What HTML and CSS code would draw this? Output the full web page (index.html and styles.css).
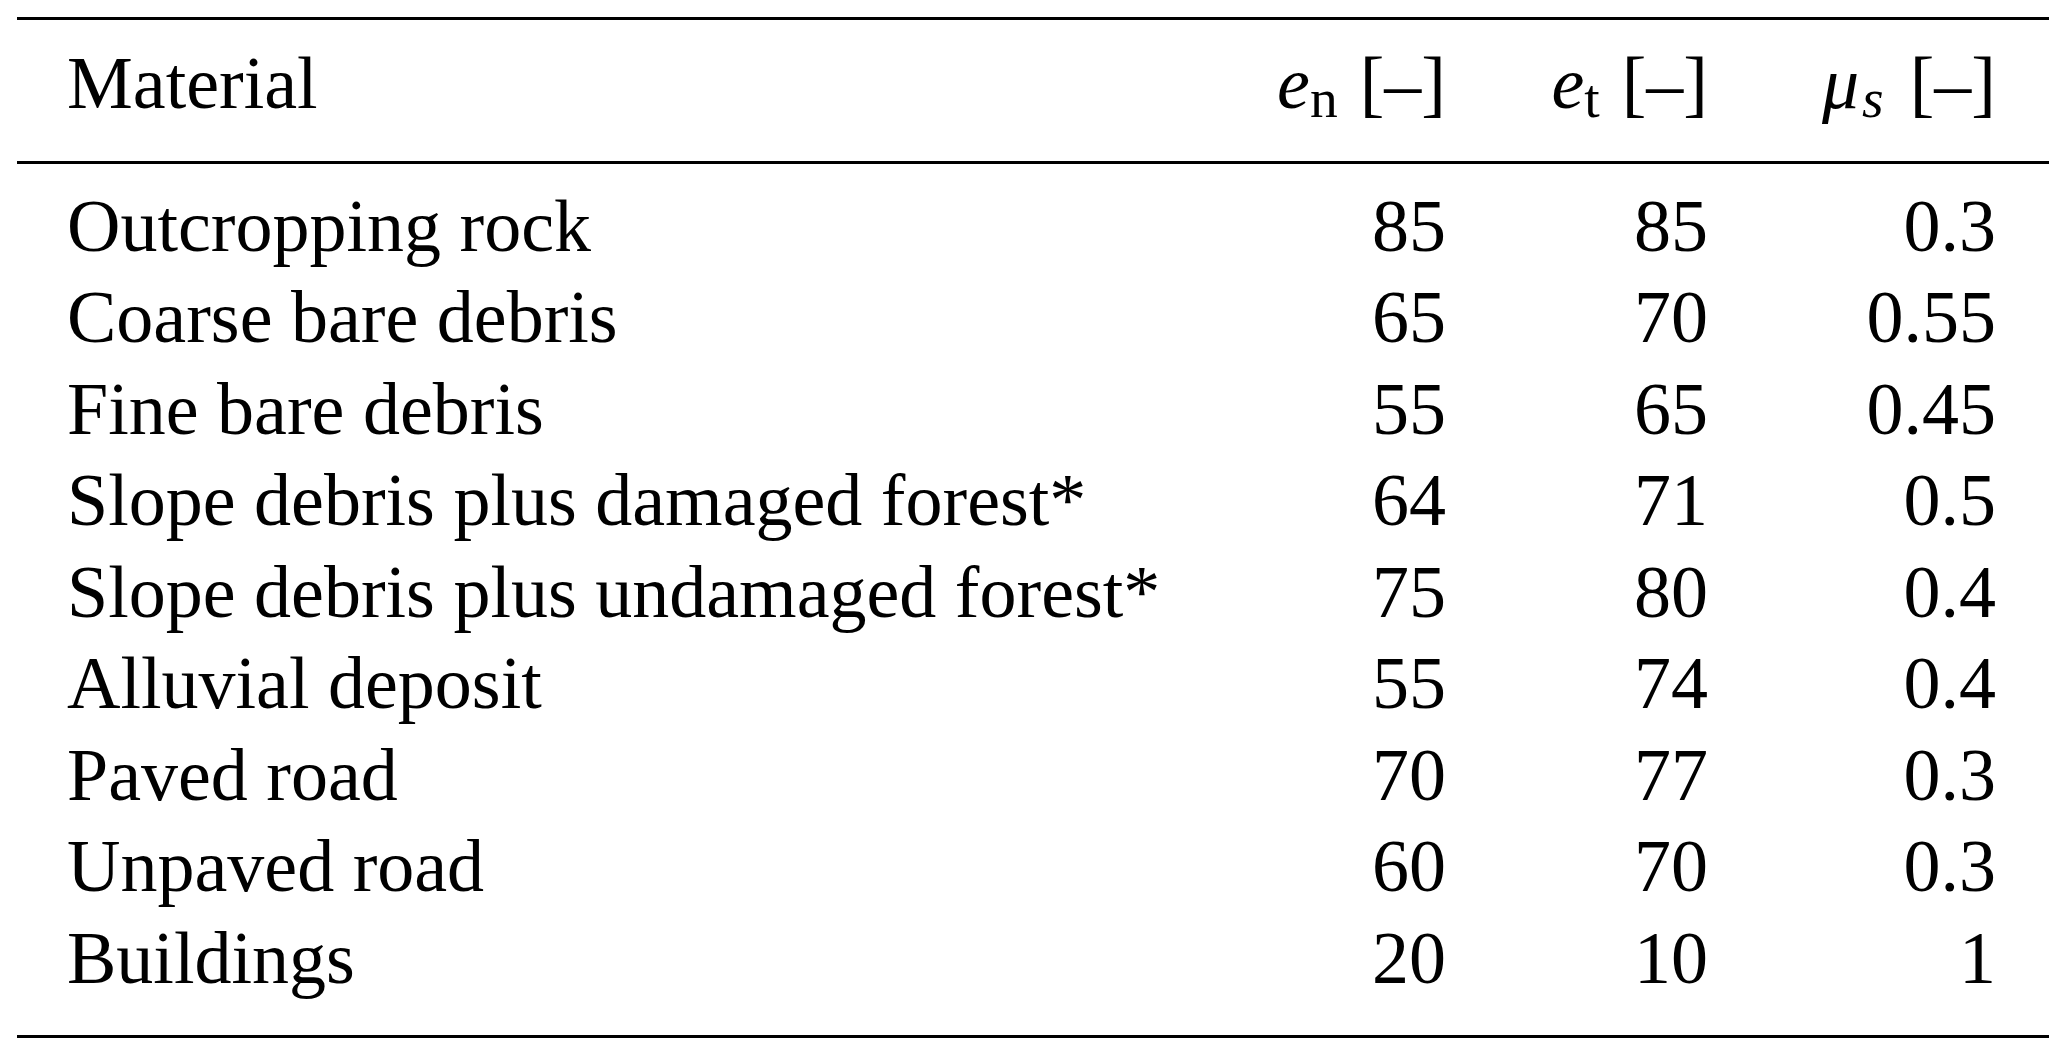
FILE: index.html
```html
<!DOCTYPE html>
<html lang="en">
<head>
<meta charset="utf-8">
<title>Material parameters</title>
<link rel="stylesheet" href="styles.css">
</head>
<body>
<div class="tbl">
  <div class="head">
    <div class="row">
      <div class="cell mat">Material</div>
      <div class="cell num"><span class="var">e</span><span class="sub">n</span><span class="unit">[–]</span></div>
      <div class="cell num"><span class="var">e</span><span class="sub">t</span><span class="unit">[–]</span></div>
      <div class="cell num"><span class="var mu">μ</span><span class="sub it">s</span><span class="unit wide">[–]</span></div>
    </div>
  </div>
  <div class="body">
    <div class="row"><div class="cell mat">Outcropping rock</div><div class="cell num">85</div><div class="cell num">85</div><div class="cell num">0.3</div></div>
    <div class="row"><div class="cell mat">Coarse bare debris</div><div class="cell num">65</div><div class="cell num">70</div><div class="cell num">0.55</div></div>
    <div class="row"><div class="cell mat">Fine bare debris</div><div class="cell num">55</div><div class="cell num">65</div><div class="cell num">0.45</div></div>
    <div class="row"><div class="cell mat">Slope debris plus damaged forest*</div><div class="cell num">64</div><div class="cell num">71</div><div class="cell num">0.5</div></div>
    <div class="row"><div class="cell mat">Slope debris plus undamaged forest*</div><div class="cell num">75</div><div class="cell num">80</div><div class="cell num">0.4</div></div>
    <div class="row"><div class="cell mat">Alluvial deposit</div><div class="cell num">55</div><div class="cell num">74</div><div class="cell num">0.4</div></div>
    <div class="row"><div class="cell mat">Paved road</div><div class="cell num">70</div><div class="cell num">77</div><div class="cell num">0.3</div></div>
    <div class="row"><div class="cell mat">Unpaved road</div><div class="cell num">60</div><div class="cell num">70</div><div class="cell num">0.3</div></div>
    <div class="row"><div class="cell mat">Buildings</div><div class="cell num">20</div><div class="cell num">10</div><div class="cell num">1</div></div>
  </div>
</div>
</body>
</html>
```

FILE: styles.css
```css
html, body {
  margin: 0;
  padding: 0;
  background: #ffffff;
}

body {
  font-family: "Liberation Serif", "Times New Roman", serif;
  font-size: 74px;
  color: #000000;
}

.tbl {
  width: 2032px;
  margin: 17px 0 0 17px;
  border-top: 3px solid #000;
  border-bottom: 3px solid #000;
}

.head {
  padding: 18px 53px 31px 50px;
  border-bottom: 3px solid #000;
}

.body {
  padding: 17px 53px 30.5px 50px;
}

.row {
  display: grid;
  grid-template-columns: 1fr 200px 262px 288px;
  line-height: 91.5px;
  height: 91.5px;
}

.cell {
  white-space: nowrap;
}

.num {
  text-align: right;
}

.var {
  font-style: italic;
}

.mu {
  margin-right: 3px;
}

.sub {
  font-size: 0.75em;
  line-height: 0;
  vertical-align: -0.16em;
}

.sub.it {
  font-style: italic;
}

.unit {
  margin-left: 22px;
}

.unit.wide {
  margin-left: 26px;
}
```
